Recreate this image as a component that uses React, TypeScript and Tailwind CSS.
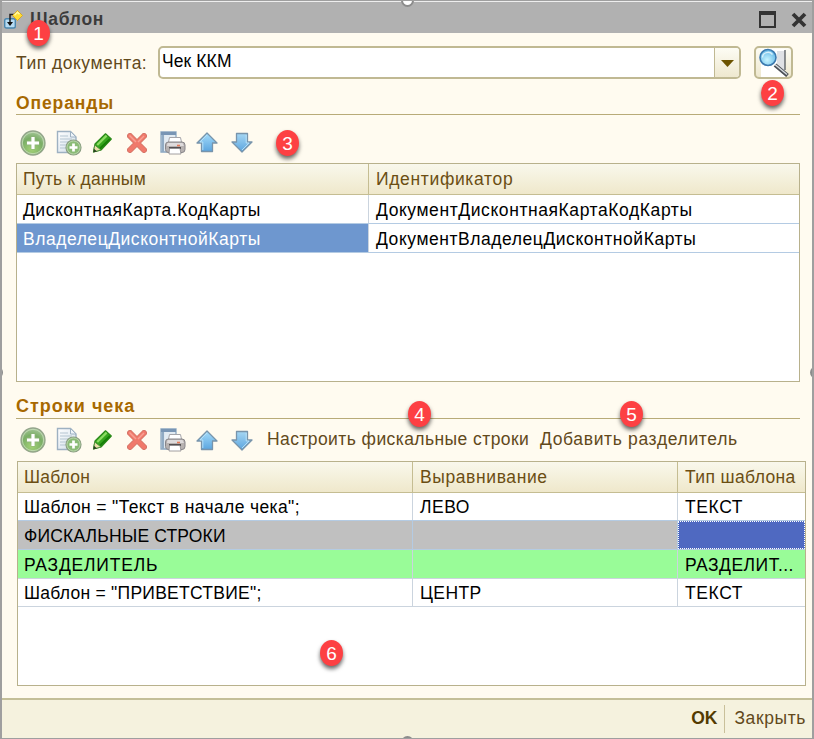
import React from "react";

function AddIcon() {
  return (
    <svg width="26" height="26" viewBox="0 0 26 26">
      <defs>
        <radialGradient id="addG" cx="45%" cy="75%" r="75%">
          <stop offset="0" stopColor="#a4d277" />
          <stop offset="0.6" stopColor="#7aae66" />
          <stop offset="1" stopColor="#a7c79b" />
        </radialGradient>
      </defs>
      <circle cx="13" cy="13" r="12" fill="url(#addG)" stroke="#94a58c" strokeWidth="1.3" />
      <circle cx="13" cy="13" r="10.7" fill="none" stroke="#c5dbb9" strokeWidth="0.9" />
      <path d="M13 6.500v13M6.500 13h13" stroke="#8fb37c" strokeWidth="4.500" />
      <path d="M13 7v12M7 13h12" stroke="#fff" strokeWidth="3.200" />
    </svg>
  );
}

function CopyIcon() {
  return (
    <svg width="26" height="26" viewBox="0 0 26 26">
      <defs>
        <linearGradient id="docG" x1="0" y1="0" x2="1" y2="1">
          <stop offset="0" stopColor="#fff" />
          <stop offset="1" stopColor="#cfdde8" />
        </linearGradient>
      </defs>
      <path d="M1.500 1.500h13l5.500 5.500v15.500h-18.500z" fill="url(#docG)" stroke="#9eb1c2" strokeWidth="1.400" />
      <path d="M14.500 1.500v5.500h5.500z" fill="#eef4f9" stroke="#9eb1c2" />
      <path d="M4 6h8M4 9h12M4 12h12M4 15h8M4 18h6" stroke="#b5c5d2" strokeWidth="1.100" />
      <circle cx="17.500" cy="17.500" r="7.500" fill="#8abb76" stroke="#8b9e83" strokeWidth="1.200" />
      <circle cx="17.500" cy="17.500" r="6.500" fill="none" stroke="#c0d8b4" strokeWidth="0.800" />
      <path d="M17.500 13.500v8M13.500 17.500h8" stroke="#fff" strokeWidth="2.700" />
    </svg>
  );
}

function EditIcon() {
  return (
    <svg width="22" height="22" viewBox="0 0 22 22">
      <path d="M1.500 20l1.500-8L13.500 1.800l5.800 5.200L9 18z" fill="#35a51d" stroke="#2d8a1b" strokeWidth="1.200" strokeLinejoin="round" />
      <path d="M5.200 13L14.600 3.600" stroke="#8bdc62" strokeWidth="2.200" />
      <path d="M8 16.500L18 7" stroke="#188009" strokeWidth="2" />
      <path d="M1.500 20l1.200-7 6.300 5z" fill="#eadfaa" stroke="#438834" strokeWidth="0.800" />
      <path d="M1.300 20.300l0.700-3.500 3 2.600z" fill="#28401f" />
    </svg>
  );
}

function DeleteIcon() {
  return (
    <svg width="20" height="20" viewBox="0 0 20 20">
      <path d="M3 3l14 14M17 3L3 17" stroke="#d5776a" strokeWidth="6" strokeLinecap="round" />
      <path d="M3 3l14 14M17 3L3 17" stroke="#f0796b" strokeWidth="4.200" strokeLinecap="round" />
      <path d="M2.500 2.500L9 9M17 3l-6 6" stroke="#f8a094" strokeWidth="1.500" />
    </svg>
  );
}

function PrintIcon() {
  return (
    <svg width="26" height="24" viewBox="0 0 26 24">
      <path d="M1 1h15v20H1z" fill="#e2ebf2" stroke="#8aa7c1" strokeWidth="1.300" />
      <path d="M1 1h15v3H1z" fill="#7895b4" />
      <path d="M2.800 4v17" stroke="#91abc3" strokeWidth="2.500" />
      <path d="M9.500 6.500h11l1.500 7H8z" fill="#fff" stroke="#a5a5a9" />
      <rect x="5.500" y="11" width="19.500" height="10.500" rx="3" fill="#b7b2b1" stroke="#88868a" />
      <path d="M7.500 12h15l1.500 3H7z" fill="#dedbdc" />
      <path d="M9 16h12v2H9z" fill="#534f51" />
      <path d="M9.500 17.500h10.500l1 5.500H9z" fill="#fff" stroke="#8b898b" strokeWidth="0.800" />
      <path d="M17 14.500h3" stroke="#e37958" strokeWidth="1.600" />
    </svg>
  );
}

function ArrowIcon({ down = false }: { down?: boolean }) {
  return (
    <svg width="22" height="21" viewBox="0 0 22 21" className={down ? "rotate-180" : ""}>
      <defs>
        <linearGradient id={down ? "arD" : "arU"} x1="0" y1="0" x2="0" y2="1">
          <stop offset="0" stopColor={down ? "#5ba5df" : "#a6ddfb"} />
          <stop offset="1" stopColor={down ? "#a5d6f3" : "#5ba5df"} />
        </linearGradient>
      </defs>
      <path d="M11 1L21 11h-4.500v8.500H5.500V11H1z" fill={down ? "url(#arD)" : "url(#arU)"} stroke="#7894ab" strokeWidth="1.300" strokeLinejoin="round" />
      <path d="M11 3L4 10h2.800v8" fill="none" stroke="#bbe3f8" strokeWidth="0.900" />
    </svg>
  );
}

function WindowIcon() {
  return (
    <svg width="20" height="19" viewBox="0 0 20 19">
      <rect x="0.700" y="8.700" width="10.600" height="9.300" rx="1.800" fill="#b7dcf3" stroke="#4b86ad" strokeWidth="1.400" />
      <path d="M11 4.500H6v9" fill="none" stroke="#222" strokeWidth="1.500" />
      <path d="M3 12h6l-3 4z" fill="#111" />
      <path d="M13.500 0.500l5 5-5 5-5-5z" fill="#ffdf35" stroke="#d6a926" />
      <path d="M10.500 5.200l3-3 2 2" fill="none" stroke="#fff8a5" strokeWidth="1.500" />
    </svg>
  );
}

function SearchIcon() {
  return (
    <svg width="32" height="30" viewBox="0 0 32 30">
      <defs>
        <radialGradient id="lens" cx="45%" cy="65%" r="60%">
          <stop offset="0" stopColor="#c8f4ff" />
          <stop offset="1" stopColor="#69bce9" />
        </radialGradient>
      </defs>
      <path d="M3 1h24v28H3z" fill="#fff" />
      <path d="M19 3h8v24l-8-8z" fill="#dfe1e5" />
      <path d="M27 2v20" stroke="#53585e" strokeWidth="1.300" />
      <path d="M17 17L29.500 27.500" stroke="#4b4f55" strokeWidth="4" />
      <path d="M17 16.500L29 26.500" stroke="#d7dce1" strokeWidth="1.500" />
      <circle cx="10" cy="9.500" r="8" fill="url(#lens)" stroke="#3c7aaf" strokeWidth="1.600" />
      <path d="M4.500 9.500a5.500 5 0 0 1 10-3" fill="none" stroke="#fff" strokeWidth="1.400" opacity="0.700" />
    </svg>
  );
}

function Tools() {
  return (
    <div className="flex shrink-0 items-center">
      <span className="mr-[10px]"><AddIcon /></span>
      <span className="mr-[10px]"><CopyIcon /></span>
      <span className="mr-[13px]"><EditIcon /></span>
      <span className="mr-[13px]"><DeleteIcon /></span>
      <span className="mr-[10px]"><PrintIcon /></span>
      <span className="mr-[13px]"><ArrowIcon /></span>
      <span><ArrowIcon down /></span>
    </div>
  );
}

function Badge({ n, at }: { n: number; at: string }) {
  return (
    <div className={`absolute flex h-[26px] w-[23px] items-center justify-center rounded-[50%] bg-[#fd4043] text-[19px] leading-none text-white shadow-[0_3px_4px_rgba(0,0,0,0.6)] ${at}`}>
      {n}
    </div>
  );
}

const head = "bg-linear-to-b from-[#f9f8ec] to-[#efe8cb] text-[#6b4e13]";

export default function App() {
  return (
    <div className="relative flex h-[739px] w-[814px] flex-col overflow-hidden border-t border-r-2 border-b border-l-2 border-[#9f9f9f] bg-[#fffbf0] font-['Liberation_Sans',Arial,sans-serif] text-[17.5px] leading-none whitespace-nowrap text-black [&_svg]:block">
      <header className="flex h-8 shrink-0 items-center border-t border-[#eeeeee] bg-[#b1b1b1] pt-[4px] pr-[5px] pl-[2px]">
        <WindowIcon />
        <span className="ml-[6px] text-[17.5px] font-bold tracking-[0.7px] text-[#3b3b3b]">Шаблон</span>
        <svg className="ml-auto" width="48" height="18" viewBox="0 0 48 18">
          <path d="M1 1h15v15H1z" fill="none" stroke="#333" strokeWidth="2" />
          <path d="M0 2h17" stroke="#333" strokeWidth="4" />
          <path d="M34 3l12 12M46 3L34 15" stroke="#333" strokeWidth="3.800" />
        </svg>
      </header>

      <div className="flex h-[46px] shrink-0 items-end pl-[14px]">
        <label className="w-[142px] pb-[7px] tracking-[0.5px] text-[#62491b]">Тип документа:</label>
        <div className="flex h-[33px] w-[583px] overflow-hidden rounded-[5px] border-2 border-[#c0b993] bg-white">
          <span className="flex-1 pt-[5px] pl-[2px] tracking-[0.1px]">Чек ККМ</span>
          <span className="flex w-[25px] items-center justify-center border-l border-[#c0b993] bg-linear-to-b from-[#fdfcf4] to-[#eee8cf]">
            <svg width="13" height="8" viewBox="0 0 13 8"><path d="M0 1h13L6.500 8z" fill="#6c5300" /></svg>
          </span>
        </div>
        <div className="ml-[13px] flex h-[33px] w-[39px] items-center justify-center overflow-hidden rounded-[5px] border-2 border-[#c0b993] bg-linear-to-b from-[#fdfcf4] to-[#eee8cf]">
          <SearchIcon />
        </div>
      </div>

      <section className="shrink-0 pl-[14px]">
        <h2 className="flex h-[36px] w-[784px] items-end border-b-[1.500px] border-[#b8ab78] pb-[2px] font-bold tracking-[0.9px] text-[#a76900]">Операнды</h2>
        <div className="flex h-[48px] items-center pt-[7px] pl-[4px]"><Tools /></div>
        <div className="h-[219px] w-[784px] border-[1.500px] border-[#b8b18c] bg-white">
          <div className={`flex h-[31px] border-b border-[#c5bd92] ${head}`}>
            <span className="w-[352px] border-r border-[#c5bd92] pt-[7px] pl-[6px] tracking-[0.25px]">Путь к данным</span>
            <span className="pt-[7px] pl-[7px] tracking-[0.65px]">Идентификатор</span>
          </div>
          <div className="flex h-[29px] border-b border-[#b4cbe3]">
            <span className="w-[352px] border-r border-[#cbd4de] pt-[7px] pl-[6px] tracking-[0.5px]">ДисконтнаяКарта.КодКарты</span>
            <span className="pt-[7px] pl-[7px] tracking-[0.58px]">ДокументДисконтнаяКартаКодКарты</span>
          </div>
          <div className="flex h-[29px] border-b border-[#b4cbe3]">
            <span className="w-[352px] border-r border-[#cbd4de] bg-[#6e97cf] pt-[7px] pl-[6px] tracking-[0.53px] text-white">ВладелецДисконтнойКарты</span>
            <span className="pt-[7px] pl-[7px] tracking-[0.55px]">ДокументВладелецДисконтнойКарты</span>
          </div>
        </div>
      </section>

      <section className="shrink-0 pl-[14px]">
        <h2 className="flex h-[37px] w-[784px] items-end border-b-[1.500px] border-[#b8ab78] pb-[3px] text-[18px] font-bold tracking-[1px] text-[#a76900]">Строки чека</h2>
        <div className="flex h-[42px] items-center pl-[4px] text-[#62491b]">
          <Tools />
          <span className="ml-[14px] w-[273px] tracking-[0.42px]">Настроить фискальные строки</span>
          <span className="tracking-[0.65px]">Добавить разделитель</span>
        </div>
        <div className="ml-px h-[225px] w-[789px] border-[1.500px] border-[#b8b18c] bg-white">
          <div className={`grid h-[31px] grid-cols-[395px_265px_127px] border-b border-[#c5bd92] ${head}`}>
            <span className="border-r border-[#c5bd92] pt-[7px] pl-[6px] tracking-[0.2px]">Шаблон</span>
            <span className="border-r border-[#c5bd92] pt-[7px] pl-[7px] tracking-[0.6px]">Выравнивание</span>
            <span className="pt-[7px] pl-[7px] tracking-[0.37px]">Тип шаблона</span>
          </div>
          <div className="grid h-[28px] grid-cols-[395px_265px_127px] border-b border-[#b4cbe3]">
            <span className="border-r border-[#cbd4de] pt-[6px] pl-[6px] tracking-[0.37px]">Шаблон = "Текст в начале чека";</span>
            <span className="border-r border-[#cbd4de] pt-[6px] pl-[7px] tracking-[0.5px]">ЛЕВО</span>
            <span className="pt-[6px] pl-[7px] tracking-[0.6px]">ТЕКСТ</span>
          </div>
          <div className="grid h-[29px] grid-cols-[395px_265px_127px] border-b border-[#b4cbe3] bg-[#c0c0c0]">
            <span className="border-r border-[#b4cbe3] pt-[7px] pl-[6px] tracking-[0.17px]">ФИСКАЛЬНЫЕ СТРОКИ</span>
            <span className="border-r border-[#b4cbe3]" />
            <span className="border border-dotted border-white bg-[#4f69c1]" />
          </div>
          <div className="grid h-[29px] grid-cols-[395px_265px_127px] border-b border-[#cbd4de] bg-[#99fc98]">
            <span className="border-r border-[#cbd4de] pt-[7px] pl-[6px] tracking-[0.8px]">РАЗДЕЛИТЕЛЬ</span>
            <span className="border-r border-[#cbd4de]" />
            <span className="pt-[7px] pl-[7px] tracking-[0.5px]">РАЗДЕЛИТ...</span>
          </div>
          <div className="grid h-[28px] grid-cols-[395px_265px_127px] border-b border-[#cbd4de]">
            <span className="border-r border-[#cbd4de] pt-[6px] pl-[6px] tracking-[0.26px]">Шаблон = "ПРИВЕТСТВИЕ";</span>
            <span className="border-r border-[#cbd4de] pt-[6px] pl-[7px] tracking-[0.4px]">ЦЕНТР</span>
            <span className="pt-[6px] pl-[7px] tracking-[0.6px]">ТЕКСТ</span>
          </div>
        </div>
      </section>

      <footer className="mt-auto flex h-[40px] shrink-0 items-center justify-end border-t-2 border-[#c4bf98] bg-[#f5f2de] pr-[6px] text-[#62491b]">
        <b className="text-[#533b00]">OK</b>
        <span className="mr-[9px] ml-[7px] h-[28px] w-px bg-[#c9c09a]" />
        <span className="tracking-[0.6px]">Закрыть</span>
      </footer>

      <Badge n={1} at="left-[25px] top-[19px]" />
      <Badge n={2} at="left-[759px] top-[79px]" />
      <Badge n={3} at="left-[274px] top-[129px]" />
      <Badge n={4} at="left-[406px] top-[400px]" />
      <Badge n={5} at="left-[618px] top-[400px]" />
      <Badge n={6} at="left-[318px] top-[639px]" />
      <i className="absolute top-[-7px] left-[399px] h-[13px] w-[13px] rounded-full border-2 border-[#8c8c8c] bg-white" />
      <i className="absolute bottom-[-11px] left-[399px] h-[13px] w-[13px] rounded-full border-2 border-[#8c8c8c] bg-white" />
      <i className="absolute top-[365px] left-[-12px] h-[13px] w-[13px] rounded-full border-2 border-[#8c8c8c] bg-white" />
      <i className="absolute top-[365px] right-[-11px] h-[13px] w-[13px] rounded-full border-2 border-[#8c8c8c] bg-white" />
    </div>
  );
}
